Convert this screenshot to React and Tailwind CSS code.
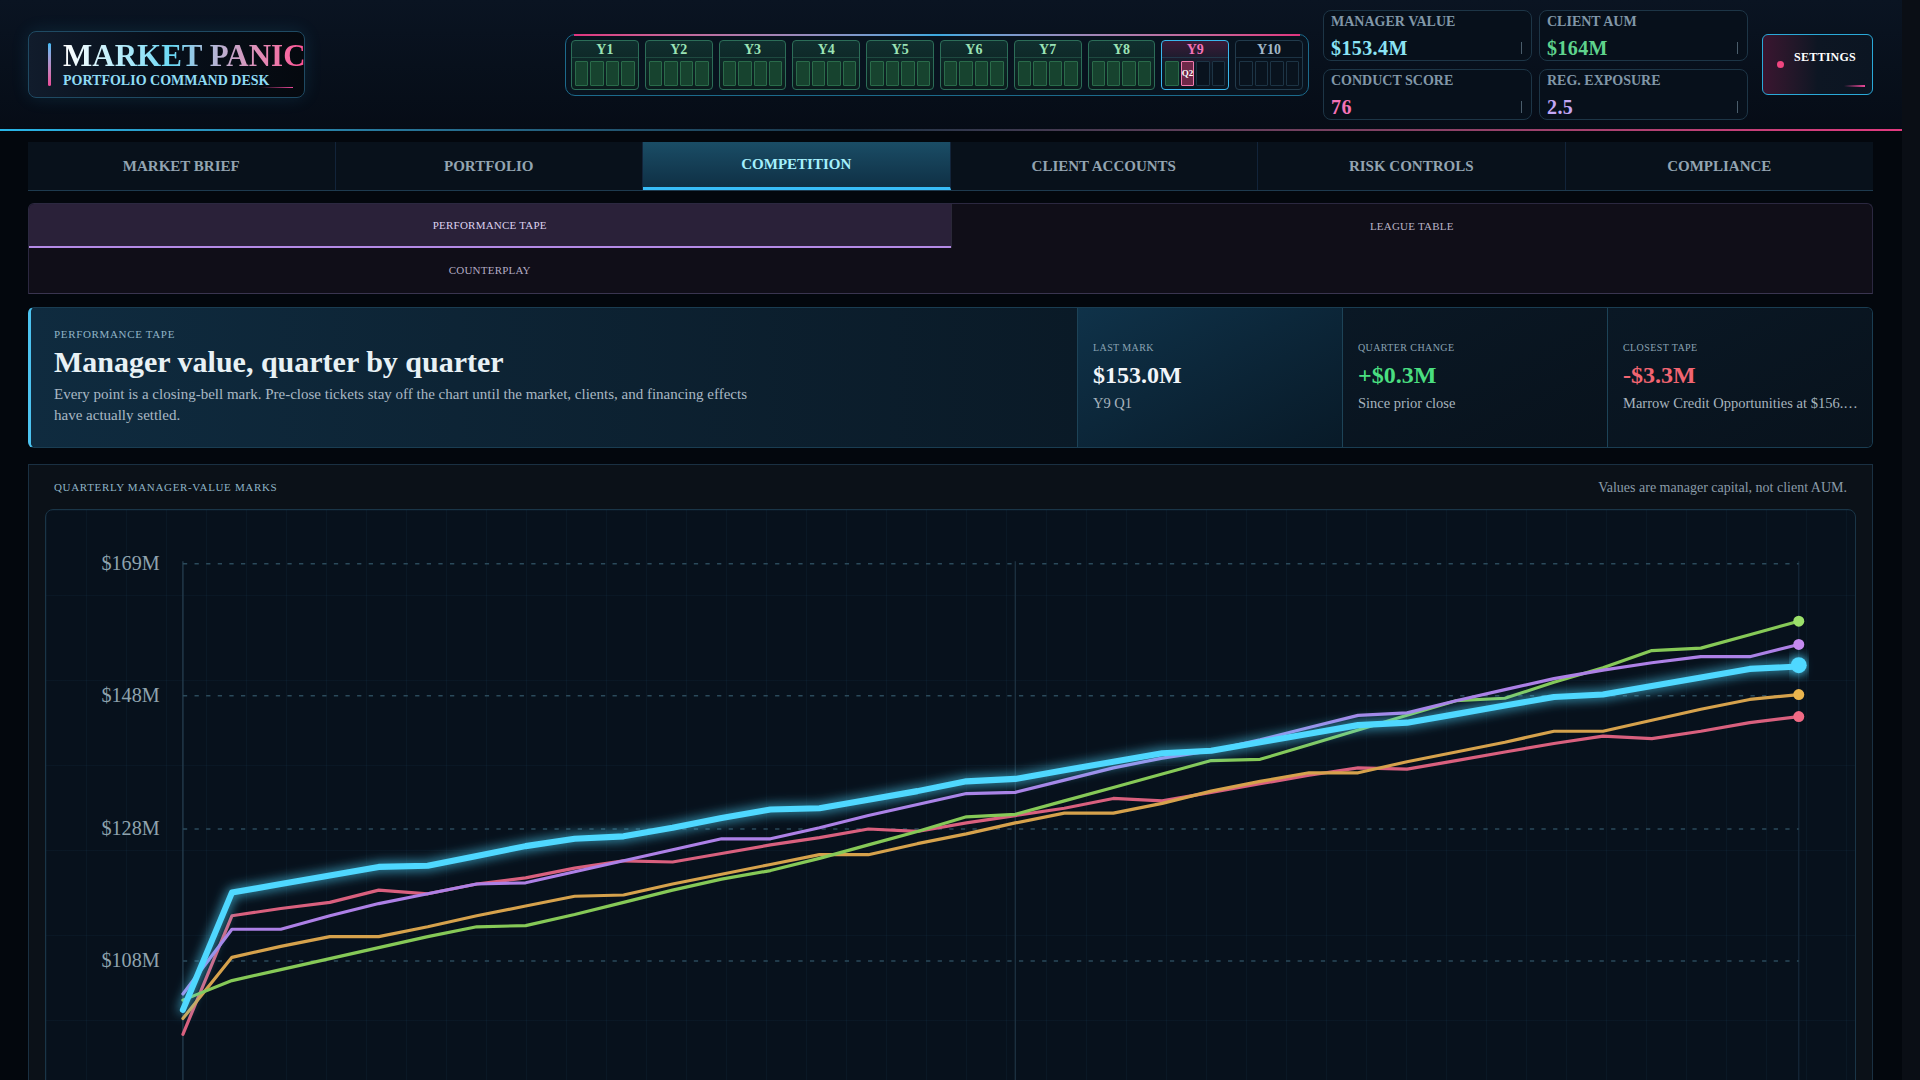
import React from 'react';

const YEARS = ['Y1', 'Y2', 'Y3', 'Y4', 'Y5', 'Y6', 'Y7', 'Y8', 'Y9', 'Y10'];
const TABS = ['Market Brief', 'Portfolio', 'Competition', 'Client Accounts', 'Risk Controls', 'Compliance'];

const SERIES = [
  { color: '#d9607e', dot: '#f06a84', pts: [845, 748, 742, 737, 727, 730, 722, 717, 709, 703, 704, 697, 690, 684, 677, 679, 672, 666, 660, 652, 654, 647, 640, 633, 627, 628, 621, 614, 607, 601, 603, 597, 590, 585] },
  { color: '#d6a24c', dot: '#eab54e', pts: [832, 782, 773, 765, 765, 757, 748, 740, 732, 731, 722, 714, 706, 698, 698, 689, 681, 672, 664, 664, 656, 646, 638, 631, 631, 622, 614, 606, 597, 597, 588, 579, 571, 567] },
  { color: '#86c957', dot: '#9be06a', pts: [817, 801, 792, 783, 774, 765, 757, 756, 747, 737, 727, 718, 711, 701, 690, 679, 667, 665, 654, 643, 632, 621, 620, 608, 596, 584, 572, 570, 557, 545, 531, 529, 518, 507] },
  { color: '#ad80e6', dot: '#c58af0', pts: [812, 759, 759, 748, 738, 730, 722, 721, 712, 703, 694, 685, 685, 676, 666, 657, 648, 647, 637, 627, 619, 613, 604, 594, 584, 582, 572, 563, 554, 547, 541, 536, 536, 526] },
];
const PLAYER = [825, 729, 722, 715, 708, 707, 699, 691, 685, 683, 676, 668, 661, 660, 653, 646, 638, 636, 629, 622, 615, 613, 606, 599, 592, 590, 583, 576, 569, 567, 560, 553, 546, 544];

const xAt = (i) => 149 + (i * 1322) / 33;
const toPath = (pts) => pts.map((y, i) => `${i === 0 ? 'M' : 'L'}${xAt(i).toFixed(1)} ${y}`).join(' ');

const YearCell = ({ label, state }) => {
  const done = state === 'done';
  const current = state === 'current';
  return (
    <div
      className={
        'w-[68px] h-[50px] rounded-[4px] flex flex-col overflow-hidden ' +
        (done
          ? 'border border-[#2c6d58] bg-gradient-to-b from-[#10302f] to-[#0b1c1d]'
          : current
          ? 'border-[1.5px] border-[#3ab7ec] bg-gradient-to-b from-[#3b1a38] via-[#0d1b29] to-[#0a1520]'
          : 'border border-[#223b4c] bg-[#08121d]')
      }
    >
      <div
        className={
          'h-[17px] leading-[17px] text-center text-[14px] font-bold border-b ' +
          (done ? 'text-[#9be3b5] border-[#1e4a40]' : current ? 'text-[#f472b6] border-[#23384a]' : 'text-[#a3b8c8] border-[#1c3344]')
        }
      >
        {label}
      </div>
      <div className="flex-1 flex gap-[2px] p-[3px]">
        {[1, 2, 3, 4].map((q) => {
          let cls = 'border-[#1d3445] bg-[#09131e]';
          if (done || (current && q === 1)) cls = 'border-[#2a6b4a] bg-[#17432f]';
          if (current && q === 2) cls = 'border-[#f27aae] bg-[#6e2849]';
          return (
            <div key={q} className={'flex-1 rounded-[1px] border flex items-center justify-center ' + cls}>
              {current && q === 2 && <span className="text-[9px] leading-none text-white font-bold">Q2</span>}
            </div>
          );
        })}
      </div>
    </div>
  );
};

const Metric = ({ label, value, color }) => (
  <div className="rounded-[8px] border border-[#1d3546] bg-[#07101b] px-[7px] pt-[1px]">
    <div className="text-[14px] leading-[20px] font-bold text-[#8197a8] uppercase whitespace-nowrap">{label}</div>
    <div className="mt-[4px] flex items-center justify-between pr-[2px]">
      <span className={'text-[20px] leading-[24px] font-bold tracking-[0.02em] ' + color}>{value}</span>
      <span className="w-px h-[12px] bg-[#4a5d6b]" />
    </div>
  </div>
);

const Stat = ({ label, value, sub, color, highlight }) => (
  <div
    className={
      'w-[265px] shrink-0 border-l border-[#1d4357] pl-[15px] pr-[14px] pt-[33px] ' +
      (highlight ? 'bg-gradient-to-br from-[#0f3249] to-[#081a28]' : 'bg-gradient-to-br from-[#0a1825] to-[#08121c]')
    }
  >
    <div className="text-[10px] leading-[14px] tracking-[0.04em] uppercase text-[#8aa3b3]">{label}</div>
    <div className={'mt-[5px] text-[24px] leading-[30px] font-bold ' + color}>{value}</div>
    <div className="mt-[4px] text-[14.5px] leading-[19px] text-[#a6b3bd] truncate">{sub}</div>
  </div>
);

const Chart = () => (
  <svg viewBox="37 416 1480 580" className="block w-full h-auto">
    <defs>
      <filter id="glow" x="-10%" y="-50%" width="120%" height="200%">
        <feGaussianBlur stdDeviation="5" result="b" />
        <feMerge>
          <feMergeNode in="b" />
          <feMergeNode in="SourceGraphic" />
        </feMerge>
      </filter>
    </defs>
    <line x1="149" y1="458" x2="149" y2="996" stroke="#22394a" strokeWidth="1.2" />
    <line x1="830" y1="458" x2="830" y2="996" stroke="#1f3444" strokeWidth="1" />
    <line x1="1471" y1="458" x2="1471" y2="996" stroke="#16293a" strokeWidth="1" />
    {[
      [460, '$169M'],
      [568, '$148M'],
      [677, '$128M'],
      [785, '$108M'],
    ].map(([y, t]) => (
      <g key={t}>
        <line x1="149" y1={y} x2="1471" y2={y} stroke="#2b4a5b" strokeWidth="1.2" strokeDasharray="3.5 6" />
        <text x="130" y={y + 5} textAnchor="end" fontSize="16.5" fill="#8fa3ae" fontFamily="'Liberation Serif', serif">
          {t}
        </text>
      </g>
    ))}
    {SERIES.map((s) => (
      <path key={s.color} d={toPath(s.pts)} fill="none" stroke={s.color} strokeWidth="2.6" strokeLinejoin="round" strokeLinecap="round" />
    ))}
    <path d={toPath(PLAYER)} fill="none" stroke="#4fd8ff" strokeWidth="5" strokeLinejoin="round" strokeLinecap="round" filter="url(#glow)" />
    {SERIES.map((s) => (
      <circle key={s.dot} cx="1471" cy={s.pts[33]} r="4.5" fill={s.dot} />
    ))}
    <circle cx="1471" cy="543" r="6.5" fill="#4fd8ff" filter="url(#glow)" />
  </svg>
);

export default function App() {
  return (
    <div className="h-screen flex bg-[#03070d] font-['Liberation_Serif',serif] text-white overflow-hidden">
      <div className="flex-1 min-w-0 h-full overflow-hidden">
        {/* Header */}
        <header className="bg-gradient-to-b from-[#0a1422] to-[#060c16]">
          <div className="h-[129px] pl-7 pr-[29px] flex items-center">
            <div className="w-[277px] h-[67px] rounded-[8px] border border-[#1f4a63] bg-gradient-to-r from-[#111c2c] via-[#070f1a] to-[#05090f] shadow-[0_0_18px_rgba(56,189,248,0.12)] flex items-center pl-[19px] overflow-hidden relative">
              <div className="w-[3px] h-[43px] rounded-full bg-gradient-to-b from-[#38bdf8] to-[#ec4899] shrink-0" />
              <div className="ml-[12px] whitespace-nowrap">
                <div className="text-[31px] leading-[32px] font-bold bg-gradient-to-r from-[#ffffff] via-[#67d8f5] via-45% to-[#ff4d94] bg-clip-text text-transparent">
                  MARKET PANIC
                </div>
                <div className="text-[14px] leading-[18px] font-bold text-[#8fdcf5]">PORTFOLIO COMMAND DESK</div>
              </div>
              <div className="absolute left-[231px] bottom-[9px] w-[33px] h-[1.5px] bg-gradient-to-r from-transparent to-[#ec4899]" />
            </div>

            <div className="ml-auto flex items-center gap-[14px]">
              <div className="relative w-[744px] h-[62px] rounded-[10px] border border-[#1c6a8c] bg-[#08131f] flex items-center gap-[6px] px-[5px]">
                <div className="absolute left-[8px] right-[8px] top-[-1px] h-[2px] bg-gradient-to-r from-[#e0347f] via-[#3aa9e0] to-[#e0347f]" />
                {YEARS.map((y, i) => (
                  <YearCell key={y} label={y} state={i < 8 ? 'done' : i === 8 ? 'current' : 'future'} />
                ))}
              </div>

              <div className="w-[425px] grid grid-cols-2 gap-x-[7px] gap-y-[8px]">
                <Metric label="Manager Value" value="$153.4M" color="text-[#8be3f5]" />
                <Metric label="Client AUM" value="$164M" color="text-[#5fd38d]" />
                <Metric label="Conduct Score" value="76" color="text-[#f472b6]" />
                <Metric label="Reg. Exposure" value="2.5" color="text-[#c4a7f5]" />
              </div>

              <button className="relative w-[111px] h-[61px] rounded-[6px] border border-[#2aa9d8] bg-gradient-to-r from-[#3a1530] via-[#0d1623] to-[#0b1522] flex items-center pl-[14px]">
                <span className="w-[7px] h-[7px] rounded-full bg-[#f0457f]" />
                <span className="ml-[10px] -translate-y-[8px] text-[12px] font-bold text-white tracking-[0.02em]">SETTINGS</span>
                <span className="absolute right-[7px] bottom-[7px] w-[21px] h-[2px] bg-gradient-to-r from-transparent to-[#ec4899]" />
              </button>
            </div>
          </div>
          <div className="h-[2px] bg-gradient-to-r from-[#29b6e8] via-[#1a3346] via-45% to-[#e23a80]" />
        </header>

        <main className="pl-7 pr-[29px] pb-10">
          {/* Main tabs */}
          <nav className="mt-[11px] grid grid-cols-6 border-b border-[#1e3a4e]">
            {TABS.map((t) => {
              const active = t === 'Competition';
              return (
                <div
                  key={t}
                  className={
                    'h-[48px] flex items-center justify-center uppercase text-[15px] font-bold border-r border-[#12243a] last:border-r-0 ' +
                    (active
                      ? 'bg-gradient-to-b from-[#1a4d66] to-[#0f3045] text-[#a5f0fc] border-b-[3px] border-b-[#38bdf8]'
                      : 'bg-[#08111b] text-[#93a4b1]')
                  }
                >
                  {t}
                </div>
              );
            })}
          </nav>

          {/* Sub tabs */}
          <div className="mt-[12px] rounded-t-[6px] border border-[#2b2840] border-b-[#3a3550] bg-[#100e18] grid grid-cols-2 overflow-hidden">
            <div className="h-[44px] flex items-center justify-center bg-[#2a2139] border-b-2 border-[#b48ae6] text-[11px] text-[#ddd2f0] uppercase tracking-[0.02em]">
              Performance Tape
            </div>
            <div className="h-[44px] flex items-center justify-center border-l border-[#2a2738] text-[11px] text-[#b9b3c6] uppercase tracking-[0.02em]">
              League Table
            </div>
            <div className="h-[45px] flex items-center justify-center text-[11px] text-[#b3abc3] uppercase tracking-[0.02em]">
              Counterplay
            </div>
            <div className="h-[45px]" />
          </div>

          {/* Hero */}
          <section className="mt-[13px] h-[141px] rounded-[6px] border border-[#1a3d52] border-l-[3px] border-l-[#4cc3f0] flex overflow-hidden">
            <div className="flex-1 pl-[23px] pt-[19px] bg-gradient-to-r from-[#0f2b3f] to-[#0a1a27]">
              <div className="text-[11px] leading-[14px] tracking-[0.06em] uppercase text-[#8fb4c6]">Performance Tape</div>
              <h1 className="mt-[3px] text-[30px] leading-[35px] font-bold text-[#e8f1f5]">Manager value, quarter by quarter</h1>
              <p className="mt-[5px] max-w-[712px] text-[15px] leading-[21px] text-[#a9b8c4]">
                Every point is a closing-bell mark. Pre-close tickets stay off the chart until the market, clients, and financing effects have actually settled.
              </p>
            </div>
            <Stat label="Last Mark" value="$153.0M" sub="Y9 Q1" color="text-[#f1f5f9]" highlight />
            <Stat label="Quarter Change" value="+$0.3M" sub="Since prior close" color="text-[#4ade80]" />
            <Stat label="Closest Tape" value="-$3.3M" sub="Marrow Credit Opportunities at $156.3M" color="text-[#f26571]" />
          </section>

          {/* Chart panel */}
          <section className="mt-[16px] border border-[#1a3042] bg-[#0b1118]">
            <div className="h-[44px] flex items-center justify-between px-[25px]">
              <span className="text-[11px] tracking-[0.06em] uppercase text-[#8fb4c6]">Quarterly Manager-Value Marks</span>
              <span className="text-[14px] text-[#8a9ba8]">Values are manager capital, not client AUM.</span>
            </div>
            <div className="mx-[16px] rounded-t-[8px] border border-[#1a3547] bg-[#07111c] bg-[linear-gradient(to_right,rgba(56,140,190,0.06)_1px,transparent_1px),linear-gradient(to_bottom,rgba(56,140,190,0.05)_1px,transparent_1px)] bg-[size:40px_85px]">
              <Chart />
            </div>
          </section>
        </main>
      </div>
      {/* scrollbar track */}
      <div className="w-[18px] shrink-0 h-full bg-[#0a0e15]" />
    </div>
  );
}
